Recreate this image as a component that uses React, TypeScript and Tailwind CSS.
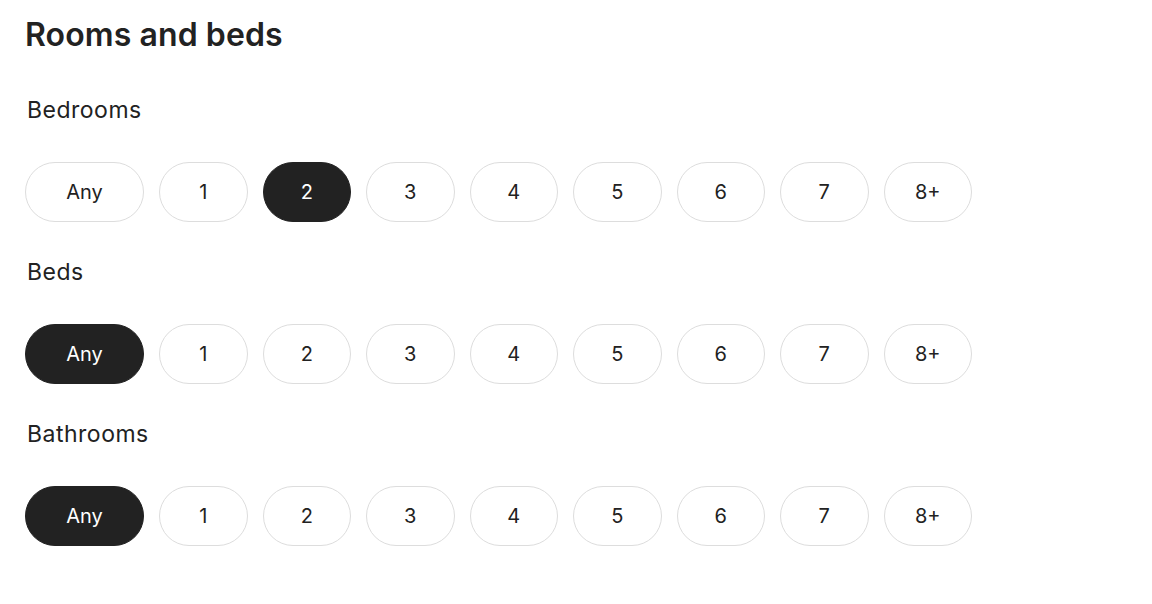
import React, { useState } from "react";

const OPTIONS = ["Any", "1", "2", "3", "4", "5", "6", "7", "8+"];

function Row({ label, initial }: { label: string; initial: string }) {
  const [sel, setSel] = useState(initial);
  return (
    <div className="flex flex-col">
      <div className="text-[23px] leading-[28px] tracking-[0.5px] text-[#222222] pl-[2px] mb-[38px]">{label}</div>
      <div className="flex gap-[15px]">
        {OPTIONS.map((o) => {
          const active = o === sel;
          return (
            <button
              key={o}
              onClick={() => setSel(o)}
              className={
                "h-[60px] rounded-full flex items-center justify-center text-[20px] " +
                (o === "Any" ? "w-[119px] " : "w-[88.5px] ") +
                (active
                  ? "bg-[#222222] text-white border border-[#222222]"
                  : "bg-white text-[#222222] border border-[#dddddd]")
              }
            >
              {o}
            </button>
          );
        })}
      </div>
    </div>
  );
}

export default function App() {
  return (
    <div
      className="w-[1152px] h-[604px] bg-white px-[25px] pt-[15px]"
      style={{ fontFamily: "Inter, 'Noto Sans', sans-serif" }}
    >
      <h1 className="text-[32px] leading-[40px] font-semibold text-[#222222] tracking-[0.1px]">Rooms and beds</h1>
      <div className="mt-[41px] flex flex-col gap-[36px]">
        <Row label="Bedrooms" initial="2" />
        <Row label="Beds" initial="Any" />
        <Row label="Bathrooms" initial="Any" />
      </div>
    </div>
  );
}
